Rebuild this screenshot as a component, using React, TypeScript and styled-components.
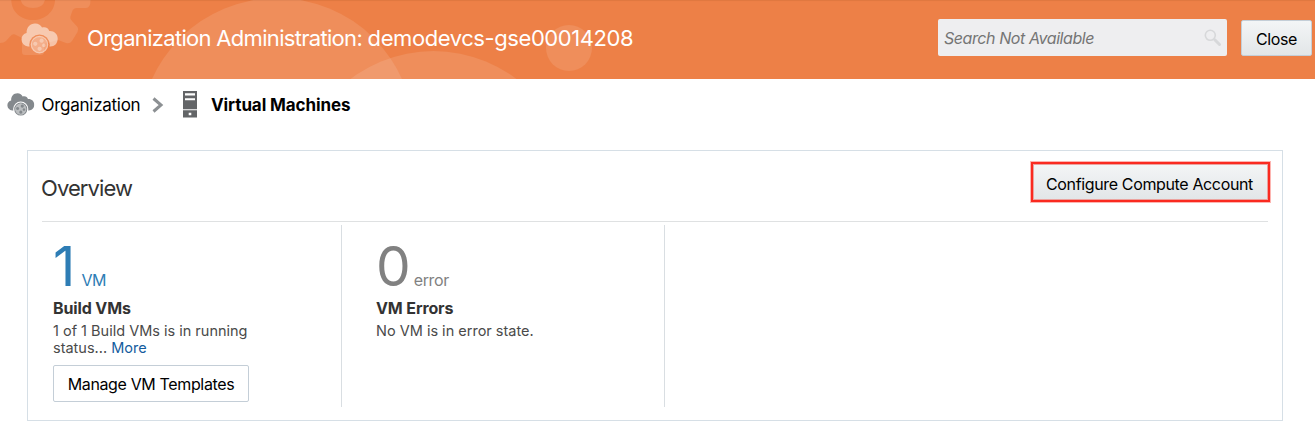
import React from "react";
import styled, { createGlobalStyle } from "styled-components";

const GlobalStyle = createGlobalStyle`
  * { box-sizing: border-box; }
  body { margin: 0; background: #fff; font-family: Inter, "Liberation Sans", sans-serif; color: #000; }
  button { font-family: inherit; }
`;

const Page = styled.div`
  width: 1315px;
  height: 436px;
  overflow: hidden;
`;

const Header = styled.header`
  position: relative;
  display: flex;
  align-items: center;
  height: 79px;
  padding: 0 3px 0 21px;
  background: #ed8047;
  box-shadow: inset 0 2px 1px -1px rgba(150, 70, 30, 0.15);
`;

const HeaderArt = styled.svg`
  position: absolute;
  left: 0;
  top: 0;
`;

const HeaderTitle = styled.h1`
  position: relative;
  flex: 1;
  margin: 0 0 3px 29px;
  font-size: 22px;
  font-weight: 400;
  line-height: 28px;
  letter-spacing: -0.69px;
  color: #fff;
  white-space: nowrap;
`;

const OrganizationName = styled.span`
  letter-spacing: -0.42px;
`;

const SearchBox = styled.div`
  display: flex;
  align-items: center;
  width: 289px;
  height: 37px;
  margin: 0 14px 4px 0;
  padding: 0 5px 0 6px;
  border-radius: 2px;
  background: #eeeef0;
`;

const SearchPlaceholder = styled.span`
  flex: 1;
  font-size: 16px;
  font-style: italic;
  letter-spacing: -0.42px;
  color: #757575;
  white-space: nowrap;
`;

const Button = styled.button<{ $plain?: boolean }>`
  display: flex;
  align-items: center;
  justify-content: center;
  height: 36px;
  padding: 0;
  border: 1px solid #c4ced7;
  border-radius: 2px;
  background: ${(p) => (p.$plain ? "#fff" : "linear-gradient(#f3f5f6, #e2e6e8)")};
  font-size: 16px;
  letter-spacing: -0.36px;
  color: #000;
  white-space: nowrap;
`;

const CloseButton = styled(Button)`
  width: 71px;
  margin-bottom: 3px;
  padding-top: 2px;
`;

const Breadcrumb = styled.nav`
  display: flex;
  align-items: center;
  height: 51px;
  padding-left: 7px;
`;

const CloudSvg = styled.svg`
  position: relative;
  flex: none;
  display: block;
`;

const HeaderLogo = styled.div`
  margin-bottom: 3px;
`;

const Crumb = styled.span<{ $current?: boolean }>`
  width: ${(p) => (p.$current ? "auto" : "110.5px")};
  margin-left: ${(p) => (p.$current ? 14 : 7)}px;
  font-size: 17px;
  font-weight: ${(p) => (p.$current ? 700 : 400)};
  letter-spacing: ${(p) => (p.$current ? "-0.1px" : "-0.27px")};
  white-space: nowrap;
`;

const ServerSvg = styled.svg`
  margin-left: 19px;
`;

const Panel = styled.section`
  width: 1256px;
  height: 271px;
  margin: 20px 0 0 27px;
  padding: 0 14px;
  border: 1px solid #d6dfe6;
`;

const PanelHeader = styled.div`
  display: flex;
  justify-content: space-between;
  height: 71px;
  border-bottom: 1px solid #dfe1e2;
`;

const PanelTitle = styled.h2`
  margin: 23px 0 0 -1px;
  font-size: 22px;
  font-weight: 400;
  line-height: 28px;
  letter-spacing: -0.92px;
  color: #333;
`;

const Highlight = styled.div`
  width: 239px;
  height: 40px;
  margin: 11px -2px 0 0;
  border: 2px solid #fa2a20;
  box-shadow: 0 0 0 1px rgba(250, 42, 32, 0.35);
`;

const ConfigureButton = styled(Button)`
  width: 100%;
  height: 36px;
  padding: 3px 2px 0 0;
  border-color: #eba39f;
  border-radius: 0;
`;

const Tiles = styled.div`
  display: flex;
  padding-top: 3px;
`;

const Tile = styled.div<{ $first?: boolean }>`
  display: flex;
  flex-direction: column;
  align-items: flex-start;
  width: ${(p) => (p.$first ? 300 : 323)}px;
  height: 182px;
  padding: 13px 0 0 ${(p) => (p.$first ? 11 : 34)}px;
  border-right: 1px solid #d9dee2;
`;

const Metric = styled.div<{ $tone: string; $gap: number }>`
  display: flex;
  align-items: baseline;
  gap: ${(p) => p.$gap}px;
  height: 60px;
  color: ${(p) => p.$tone};
`;

const Count = styled.span`
  font-size: 55px;
  font-weight: 430;
  line-height: 56px;
`;

const Unit = styled.span`
  font-size: 16px;
  letter-spacing: -0.35px;
`;

const TileTitle = styled.h3`
  margin: 0;
  font-size: 16px;
  line-height: 20px;
  font-weight: 700;
  letter-spacing: -0.12px;
  color: #333;
`;

const TileText = styled.p`
  width: 210px;
  margin: 4px 0 0;
  font-size: 14.5px;
  line-height: 17px;
  color: #4a4a4a;
`;

const MoreLink = styled.a`
  color: #145c9e;
`;

const ManageButton = styled(Button)`
  width: 196px;
  height: 37px;
  margin-top: 9px;
`;

function CloudIcon({ width, color, opacity = 1, id }: { width: number; color: string; opacity?: number; id: string }) {
  return (
    <CloudSvg width={width} height={(width * 31) / 37} viewBox="0 0 37 31">
      <mask id={id}>
        <rect width="37" height="31" fill="#fff" />
        <circle cx="18.5" cy="21.6" r="10.2" fill="#000" />
      </mask>
      <g fill={color} opacity={opacity}>
        <path
          mask={`url(#${id})`}
          d="M7 23.5 A7 7 0 0 1 .5 16.5 C.5 13 2.6 10.7 5.6 10 C5.4 4.2 9 .4 14 .4 C17.6 .4 20 2.2 21 4.6 C24.5 3.5 27.6 5.2 28.2 8 C33 7.6 36.7 11 36.7 15.5 C36.7 20.5 33.5 23.5 29.5 23.5 Z"
        />
        <circle cx="18.5" cy="21.6" r="8.1" fill="none" stroke={color} strokeWidth="1.4" />
        <circle cx="18.5" cy="21.6" r="7.5" opacity="0.55" />
        <path d="M20.6 15.6 a2.1 2.1 0 1 1 -.01 0 Z M14.3 18.7 a2.1 2.1 0 1 1 -.01 0 Z M18.6 23.7 a2.1 2.1 0 1 1 -.01 0 Z M22.8 20.6 a1.7 1.7 0 1 1 -.01 0 Z" />
      </g>
    </CloudSvg>
  );
}

export default function App() {
  return (
    <Page>
      <GlobalStyle />
      <Header>
        <HeaderArt width="700" height="79" viewBox="0 0 700 79" fill="#fff" fillOpacity="0.11">
          <circle cx="277" cy="135" r="137" />
          <circle cx="433.5" cy="188" r="137" />
          <circle cx="569" cy="48" r="23" />
          <path
            fillRule="evenodd"
            d="M0 0 H11.3 C11.5 12 21 20 33 20 C45 20 54.5 12 55 0 H90.5 Q90.5 8 86 8 H77 Q73 8 72 12 L70.3 17 Q70 19 72 21 L77.5 27 Q79 29 77.5 32 L72 41 Q70 44 66 43 L58 40 L44 44 V52 Q44 55 41 55 H25 Q22 55 22 52 V38 L15 34.5 Q12.5 33.5 10.5 36 L6 41 Q4 43 0 43 Z"
          />
          <path d="M20.5 0 H45 Q43 8 33 8 Q23 8 20.5 0 Z" />
        </HeaderArt>
        <HeaderLogo>
          <CloudIcon width={37} color="#fff" opacity={0.52} id="logo-gap" />
        </HeaderLogo>
        <HeaderTitle>
          Organization Administration: <OrganizationName>demodevcs-gse00014208</OrganizationName>
        </HeaderTitle>
        <SearchBox>
          <SearchPlaceholder>Search Not Available</SearchPlaceholder>
          <svg width="18" height="18" viewBox="0 0 18 18" fill="none" stroke="#d7d8da">
            <circle cx="6.3" cy="6.3" r="5" strokeWidth="1.6" />
            <path d="M10.8 10.8 L15.5 15.5" strokeWidth="3" strokeLinecap="round" />
          </svg>
        </SearchBox>
        <CloseButton>Close</CloseButton>
      </Header>
      <Breadcrumb>
        <CloudIcon width={27.5} color="#84898d" id="crumb-gap" />
        <Crumb>Organization</Crumb>
        <svg width="12" height="18" viewBox="0 0 12 18" fill="none" stroke="#8c9093" strokeWidth="3">
          <path d="M1.5 2.5 L9 9 L1.5 15.5" />
        </svg>
        <ServerSvg width="14" height="27" viewBox="0 0 14 27">
          <path fill="#636567" d="M0 0 H14 V18.3 H0 Z M0 19.3 H14 V26.5 H0 Z" />
          <path fill="#fff" d="M2 2.3 H12 V4.5 H2 Z M2 7.2 H12 V9.2 H2 Z M5.7 21.8 H8.3 V24.2 H5.7 Z" />
        </ServerSvg>
        <Crumb $current>Virtual Machines</Crumb>
      </Breadcrumb>
      <Panel>
        <PanelHeader>
          <PanelTitle>Overview</PanelTitle>
          <Highlight>
            <ConfigureButton>Configure Compute Account</ConfigureButton>
          </Highlight>
        </PanelHeader>
        <Tiles>
          <Tile $first>
            <Metric $tone="#2e7db5" $gap={6}>
              <Count>1</Count>
              <Unit>VM</Unit>
            </Metric>
            <TileTitle>Build VMs</TileTitle>
            <TileText>
              1 of 1 Build VMs is in running status... <MoreLink>More</MoreLink>
            </TileText>
            <ManageButton $plain>Manage VM Templates</ManageButton>
          </Tile>
          <Tile>
            <Metric $tone="#818181" $gap={3}>
              <Count>0</Count>
              <Unit>error</Unit>
            </Metric>
            <TileTitle>VM Errors</TileTitle>
            <TileText>No VM is in error state.</TileText>
          </Tile>
        </Tiles>
      </Panel>
    </Page>
  );
}
